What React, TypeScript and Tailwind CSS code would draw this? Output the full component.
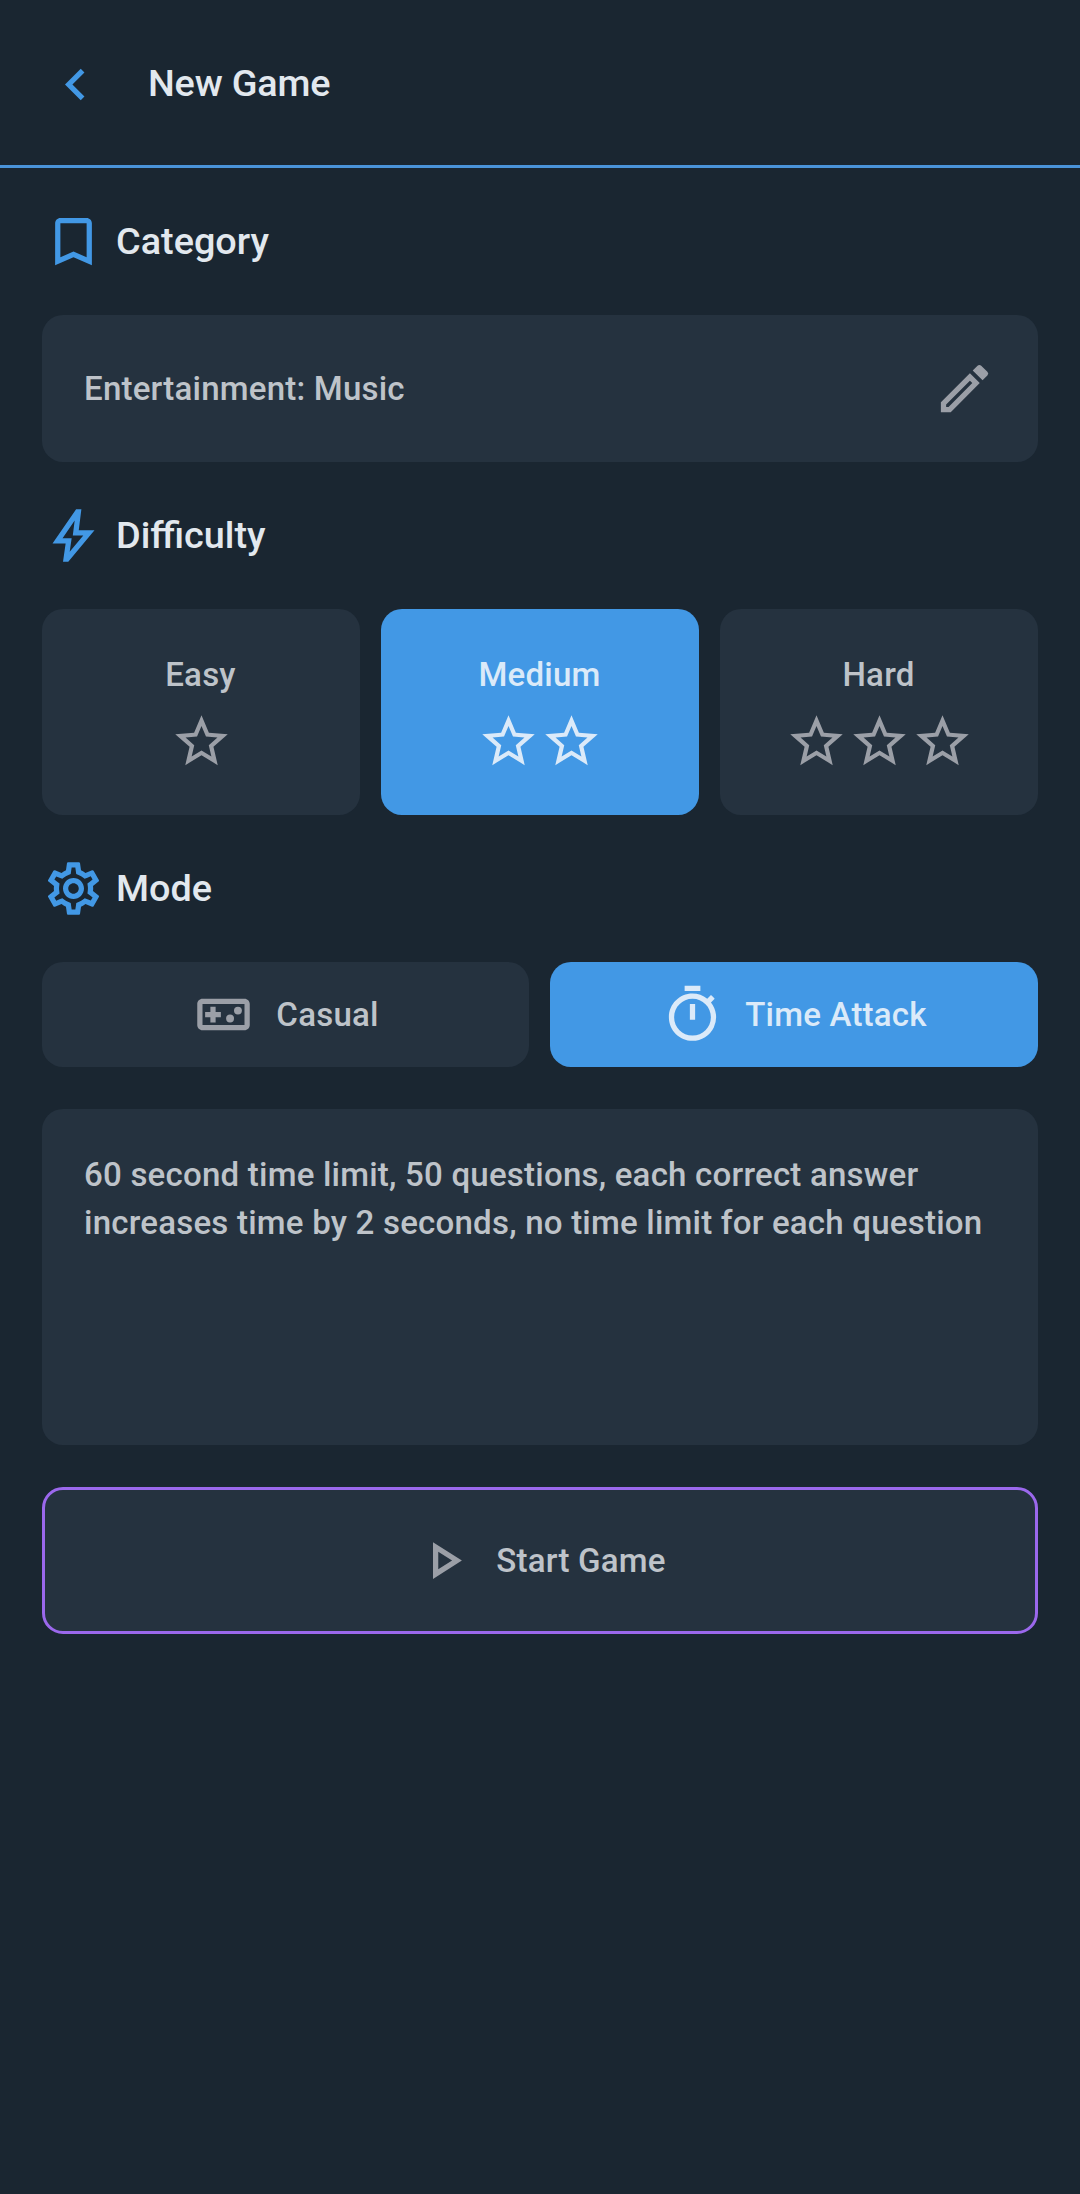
import type { ReactNode } from "react";
import {
  MdBookmarkBorder,
  MdChevronLeft,
  MdOutlineEdit,
  MdOutlinePlayArrow,
  MdOutlineSettings,
  MdOutlineTimer,
  MdStarOutline,
} from "react-icons/md";

function BoltIcon({ className }: { className?: string }) {
  return (
    <svg viewBox="0 -960 960 960" fill="currentColor" className={className}>
      <path d="m422-232 207-248H469l29-227-185 267h139l-30 208ZM320-80l40-280H160l360-520h80l-40 320h240L400-80h-80Z" />
    </svg>
  );
}

function GamepadIcon({ className }: { className?: string }) {
  return (
    <svg viewBox="0 0 24 24" fill="currentColor" className={className}>
      <path
        fillRule="evenodd"
        d="M4 6h16c1.1 0 2 .9 2 2v8c0 1.1-.9 2-2 2H4c-1.1 0-2-.9-2-2V8c0-1.1.9-2 2-2Zm0 2v8h16V8H4Z"
      />
      <path d="M7 15h2v-2h2v-2H9V9H7v2H5v2h2z" />
      <circle cx="14.5" cy="13.5" r="1.5" />
      <circle cx="17.5" cy="10.5" r="1.5" />
    </svg>
  );
}

function SectionHeading({ icon, title }: { icon: ReactNode; title: string }) {
  return (
    <div className="my-[42px] flex h-[63px] items-center gap-[11px] tracking-normal text-[#4298e5]">
      {icon}
      <h2 className="pb-px text-[37.8px] leading-[53px] font-medium text-[#e2e8ee]">{title}</h2>
    </div>
  );
}

const cardBase = "rounded-[21px]";
const idle = "bg-[#25323f]";
const active = "bg-[#4298e5]";

function DifficultyCard({ label, stars, selected = false }: { label: string; stars: number; selected?: boolean }) {
  return (
    <button className={`flex h-[206px] flex-1 flex-col items-center pt-[42px] ${cardBase} ${selected ? active : idle}`}>
      <span className={`pr-px leading-[48px] ${selected ? "text-[#dbeaf9]" : "text-[#bec3c9]"}`}>{label}</span>
      <span className={`mt-[11px] flex ${selected ? "text-[#dbeaf9]" : "text-[#9b9fa7]"}`}>
        {Array.from({ length: stars }, (_, i) => (
          <MdStarOutline key={i} className="size-[63px]" />
        ))}
      </span>
    </button>
  );
}

function ModeButton({ label, icon, selected = false }: { label: string; icon: ReactNode; selected?: boolean }) {
  return (
    <button className={`flex h-[105px] items-center justify-center gap-[21px] ${cardBase} ${selected ? active : idle}`}>
      <span className={selected ? "text-[#dbeaf9]" : "text-[#9b9fa7]"}>{icon}</span>
      <span className={`leading-[48px] ${selected ? "text-[#dbeaf9]" : "text-[#bec3c9]"}`}>{label}</span>
    </button>
  );
}

export default function App() {
  return (
    <div className="min-h-[2194px] w-full bg-[#1a2631] font-['Roboto',sans-serif] text-[33.07px] font-medium tracking-[0.2px] text-[#bec3c9]">
      <header className="flex h-[168px] items-center border-b-[3px] border-[#4a93d9] pl-[44px] tracking-normal">
        <button className="text-[#4298e5]">
          <MdChevronLeft className="mt-[3px] size-[63px]" />
        </button>
        <h1 className="ml-[41px] pt-px text-[37.8px] leading-[53px] font-medium tracking-[-0.2px] text-[#e2e8ee]">New Game</h1>
      </header>

      <main className="flex flex-col px-[42px]">
        <SectionHeading icon={<MdBookmarkBorder className="size-[63px]" />} title="Category" />
        <button className={`flex h-[147px] items-center justify-between px-[42px] ${cardBase} ${idle}`}>
          <span className="leading-[48px]">Entertainment: Music</span>
          <MdOutlineEdit className="size-[63px] text-[#9b9fa7]" />
        </button>

        <SectionHeading icon={<BoltIcon className="size-[63px]" />} title="Difficulty" />
        <div className="flex gap-[21px]">
          <DifficultyCard label="Easy" stars={1} />
          <DifficultyCard label="Medium" stars={2} selected />
          <DifficultyCard label="Hard" stars={3} />
        </div>

        <SectionHeading icon={<MdOutlineSettings className="size-[63px]" />} title="Mode" />
        <div className="grid grid-cols-[487px_1fr] gap-[21px]">
          <ModeButton label="Casual" icon={<GamepadIcon className="size-[63px]" />} />
          <ModeButton label="Time Attack" icon={<MdOutlineTimer className="size-[63px]" />} selected />
        </div>

        <div className={`mt-[42px] h-[336px] p-[42px] leading-[48px] ${cardBase} ${idle}`}>
          <p className="whitespace-nowrap">
            60 second time limit, 50 questions, each correct answer
            <br />
            increases time by 2 seconds, no time limit for each question
          </p>
        </div>

        <button className={`mt-[42px] flex h-[147px] items-center justify-center gap-[21px] border-[3px] border-[#9b68ec] pr-[2px] ${cardBase} ${idle}`}>
          <MdOutlinePlayArrow className="size-[63px] text-[#9b9fa7]" />
          <span className="leading-[48px]">Start Game</span>
        </button>
      </main>
    </div>
  );
}
